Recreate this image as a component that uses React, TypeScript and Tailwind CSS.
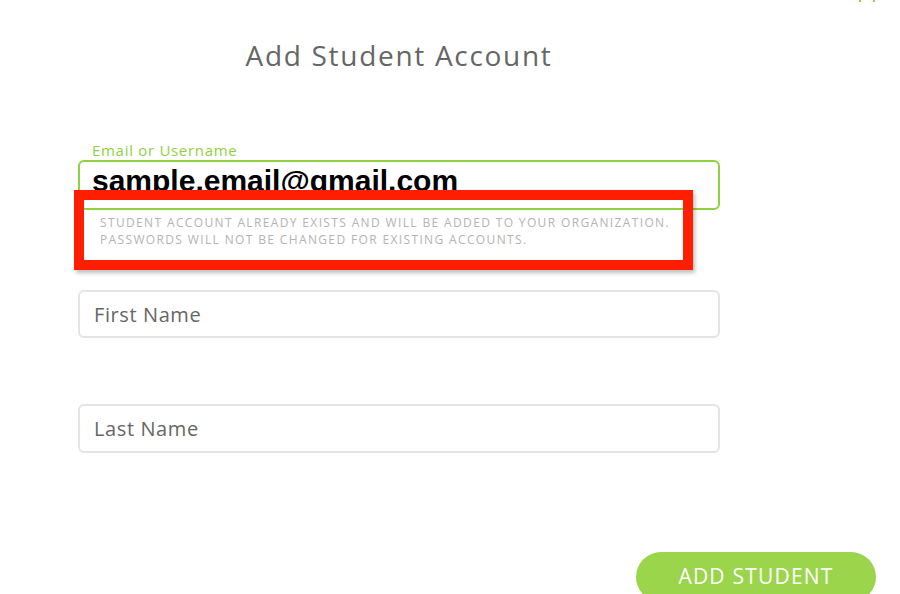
export default function App() {
  return (
    <div className="relative w-[900px] h-[594px] overflow-hidden bg-white font-['Open_Sans',sans-serif]">
      {/* cut-off close icon at top right */}
      <span className="absolute left-[859px] top-0 h-[2px] w-[2px] bg-[#8fd13f]" />
      <span className="absolute left-[873px] top-0 h-[2px] w-[2px] bg-[#8fd13f]" />

      <div className="ml-[78px] w-[642px] pt-[37px]">
        <h1 className="text-center text-[28px] font-medium leading-[36px] tracking-[1.7px] text-[#666666]">
          Add Student Account
        </h1>

        <label className="mt-[68px] mb-[1px] block pl-[14px] text-[15px] font-medium leading-[18px] tracking-[0.7px] text-[#8fd13f]">
          Email or Username
        </label>
        <div className="h-[50px] overflow-hidden rounded-[6px] border-2 border-[#8fd13f] pl-[12px] pt-[4px]">
          <span className="font-['Liberation_Sans',Arial,sans-serif] text-[30px] font-bold leading-[30px] text-black">
            sample.email@gmail.com
          </span>
        </div>
        <p className="mt-[4px] pl-[22px] text-[12px] uppercase leading-[17px] tracking-[1.36px] text-[#b3b3b3]">
          Student account already exists and will be added to your organization.
          <br />
          Passwords will not be changed for existing accounts.
        </p>

        <input
          type="text"
          placeholder="First Name"
          className="mt-[42px] block h-[48px] w-full rounded-[6px] border-2 border-[#e4e4e4] pl-[14px] text-[20px] font-medium tracking-[0.6px] text-[#666666] outline-none placeholder:text-[#666666]"
        />
        <input
          type="text"
          placeholder="Last Name"
          className="mt-[66px] block h-[49px] w-full rounded-[6px] border-2 border-[#e4e4e4] pl-[14px] text-[20px] font-medium tracking-[0.6px] text-[#666666] outline-none placeholder:text-[#666666]"
        />
      </div>

      <div className="mt-[99px] flex justify-end pr-[24px]">
        <button className="h-[50px] w-[240px] rounded-full bg-[#9bd54b] text-[21px] font-medium tracking-[1.2px] text-white">
          ADD STUDENT
        </button>
      </div>

      {/* annotation box */}
      <div className="absolute left-[74px] top-[190px] h-[80px] w-[619px] border-[10px] border-[#ff1e00] shadow-[2px_3px_4px_rgba(0,0,0,0.25)]" />
    </div>
  );
}
